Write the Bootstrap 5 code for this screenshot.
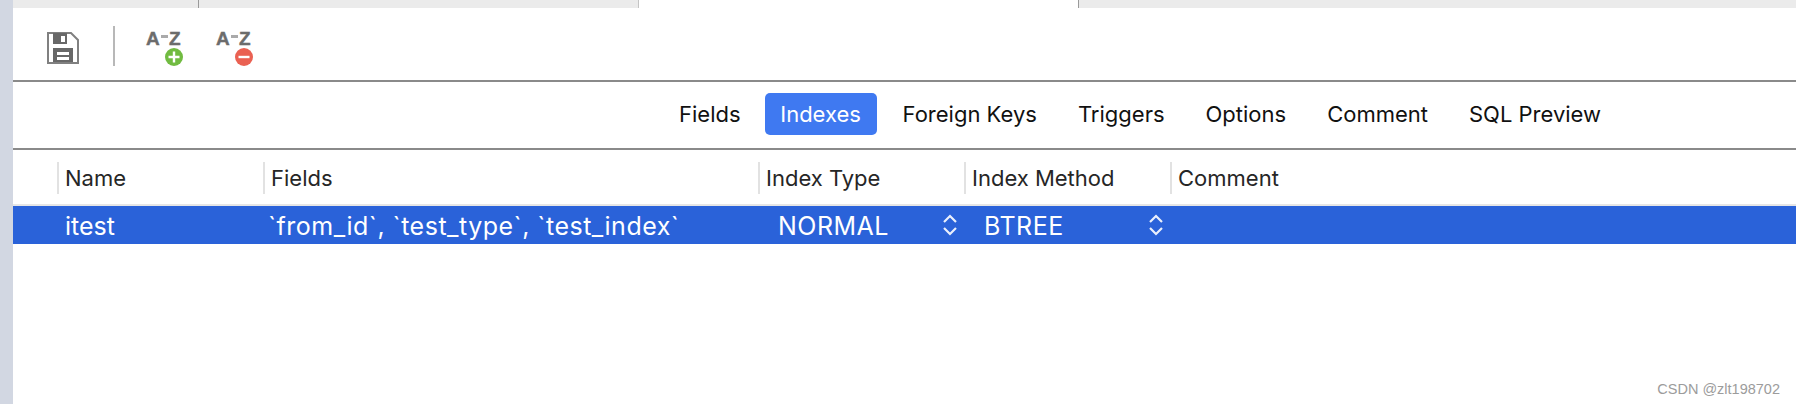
<!DOCTYPE html>
<html lang="en">
<head>
  <meta charset="UTF-8">
  <title>Indexes</title>
  <link href="https://cdn.jsdelivr.net/npm/bootstrap@5.3.0/dist/css/bootstrap.min.css" rel="stylesheet">
  <style>
    html, body { height: 404px; overflow: hidden; }
    body { background: #fff; font-family: Inter, "Liberation Sans", sans-serif; color: #111; }
    .side-strip { width: 13px; background: #d2d7e2; }
    .tab-strip { height: 8px; background: #ebebeb; }
    .tab-one { width: 186px; border-right: 1px solid #9a9a9a; }
    .tab-two { width: 440px; border-right: 1px solid #c4c4c4; }
    .tab-active { width: 440px; background: #fff; border-right: 1px solid #9a9a9a; }
    .tool-bar { height: 74px; border-bottom: 2px solid #8a8a8a; padding: 4px 0 0 34px; }
    .save-icon { margin-top: 4px; }
    .tool-sep { width: 2px; height: 40px; background: #b8b8b8; margin: 0 29px 0 34px; }
    .sort-icon { width: 40px; height: 50px; margin-right: 30px; }
    .sub-tabs { height: 68px; border-bottom: 2px solid #8a8a8a; padding: 0 0 3px 666px; font-size: 22px; }
    .sub-tab { height: 42px; line-height: 42px; margin-right: 41px; }
    .sub-tab.tab-before { margin-right: 24px; }
    .sub-tab.is-on { background: #3f79f1; color: #fff; border-radius: 5px; width: 112px; text-align: center; margin-right: 26px; }
    .head-row { height: 56px; border-bottom: 2px solid #e6e6e6; padding: 2px 0 0 44px; font-size: 22px; color: #262626; }
    .head-cell { height: 32px; line-height: 32px; border-left: 2px solid #e2e2e2; padding-left: 6px; }
    .w-name { width: 206px; }
    .w-fields { width: 495px; }
    .w-type, .w-method { width: 206px; }
    .index-row { height: 38px; background: #2a62d9; color: #fff; padding-left: 44px; font-size: 25px; }
    .index-row .w-name { padding: 3px 0 0 8px; }
    .index-row .w-fields { padding: 3px 0 0 5px; letter-spacing: .5px; }
    .pick-cell { padding: 0 6px 0 20px; letter-spacing: .5px; }
    .pick-cell span { padding-top: 3px; }
    .watermark { position: absolute; right: 16px; bottom: 7px; font: 14.5px "Liberation Sans", sans-serif; color: #9c9c9c; }
  </style>
</head>
<body class="d-flex position-relative">
  <div class="side-strip flex-shrink-0"></div>
  <div class="flex-grow-1">
    <div class="tab-strip d-flex">
      <div class="tab-one"></div>
      <div class="tab-two"></div>
      <div class="tab-active"></div>
    </div>

    <!-- Barra de iconos -->
    <div class="tool-bar d-flex align-items-center">
      <svg width="32" height="32" viewBox="0 0 32 32" class="save-icon flex-shrink-0">
        <path d="M1 1H24L31 8V31H1Z" fill="#fff" stroke="#808080" stroke-width="2"/>
        <path d="M6 1H20V12H6Z" fill="#686868"/>
        <rect x="14" y="4" width="4" height="6" fill="#fff"/>
        <path d="M6 16H26V30H6Z" fill="#686868"/>
        <rect x="10" y="20" width="12" height="3" fill="#fff"/>
        <rect x="10" y="25" width="12" height="3" fill="#fff"/>
      </svg>
      <div class="tool-sep flex-shrink-0"></div>
      <svg class="sort-icon flex-shrink-0" viewBox="0 0 40 50">
        <text x="2" y="24" font-family="Liberation Sans" font-weight="700" font-size="19" fill="#6c6c6c" stroke="#6c6c6c" stroke-width=".4">A</text>
        <rect x="17" y="14" width="7" height="3" fill="#aaa"/>
        <text x="25" y="24" font-family="Liberation Sans" font-weight="700" font-size="19" fill="#6c6c6c" stroke="#6c6c6c" stroke-width=".4">Z</text>
        <circle cx="30" cy="36" r="9" fill="#71bb41"/>
        <path d="M30 30.5V41.5M24.5 36H35.5" stroke="#fff" stroke-width="2.4"/>
      </svg>
      <svg class="sort-icon flex-shrink-0" viewBox="0 0 40 50">
        <text x="2" y="24" font-family="Liberation Sans" font-weight="700" font-size="19" fill="#6c6c6c" stroke="#6c6c6c" stroke-width=".4">A</text>
        <rect x="17" y="14" width="7" height="3" fill="#aaa"/>
        <text x="25" y="24" font-family="Liberation Sans" font-weight="700" font-size="19" fill="#6c6c6c" stroke="#6c6c6c" stroke-width=".4">Z</text>
        <circle cx="30" cy="36" r="9" fill="#ea6152"/>
        <path d="M24.5 36H35.5" stroke="#fff" stroke-width="2.4"/>
      </svg>
    </div>

    <!-- Pestanas -->
    <div class="sub-tabs d-flex align-items-center">
      <span class="sub-tab tab-before">Fields</span>
      <span class="sub-tab is-on">Indexes</span>
      <span class="sub-tab">Foreign Keys</span>
      <span class="sub-tab">Triggers</span>
      <span class="sub-tab">Options</span>
      <span class="sub-tab">Comment</span>
      <span class="sub-tab">SQL Preview</span>
    </div>

    <div class="head-row d-flex align-items-center">
      <div class="head-cell w-name">Name</div>
      <div class="head-cell w-fields">Fields</div>
      <div class="head-cell w-type">Index Type</div>
      <div class="head-cell w-method">Index Method</div>
      <div class="head-cell">Comment</div>
    </div>

    <div class="index-row d-flex align-items-center">
      <div class="w-name">itest</div>
      <div class="w-fields">`from_id`, `test_type`, `test_index`</div>
      <div class="w-type pick-cell d-flex align-items-center justify-content-between">
        <span>NORMAL</span>
        <svg width="16" height="24" viewBox="0 0 16 24"><path d="M2 9L8 3L14 9M2 15L8 21L14 15" fill="none" stroke="#fff" stroke-width="2.2" opacity=".9"/></svg>
      </div>
      <div class="w-method pick-cell d-flex align-items-center justify-content-between">
        <span>BTREE</span>
        <svg width="16" height="24" viewBox="0 0 16 24"><path d="M2 9L8 3L14 9M2 15L8 21L14 15" fill="none" stroke="#fff" stroke-width="2.2" opacity=".9"/></svg>
      </div>
    </div>
  </div>
  <div class="watermark">CSDN @zlt198702</div>
</body>
</html>
